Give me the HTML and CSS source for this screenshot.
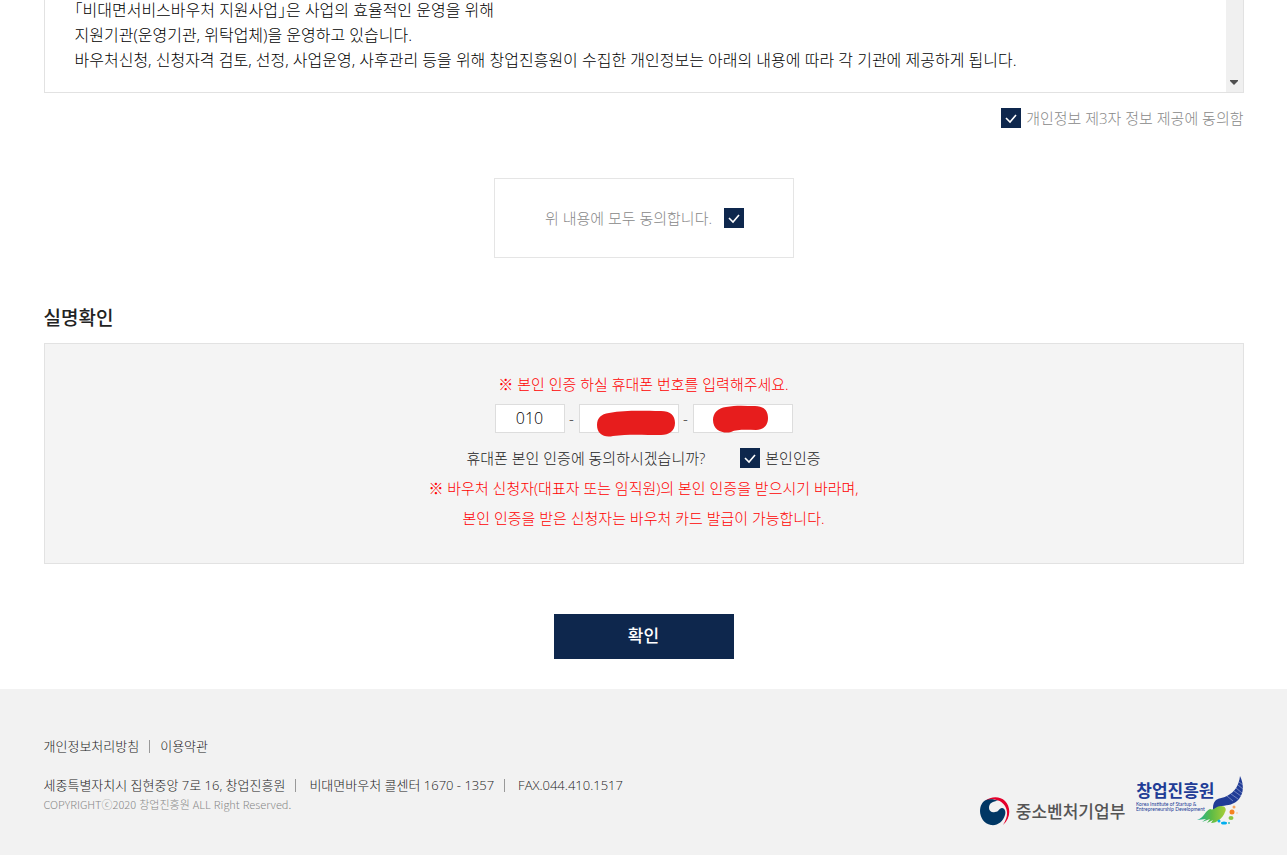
FILE: index.html
```html
<!DOCTYPE html>
<html lang="ko">
<head>
<meta charset="utf-8">
<meta name="viewport" content="width=device-width, initial-scale=1">
<title>실명확인</title>
<link rel="stylesheet" href="styles.css">
</head>
<body>
<main class="container">
  <section class="terms">
    <div class="terms-text">
      <p>「비대면서비스바우처 지원사업」은 사업의 효율적인 운영을 위해</p>
      <p>지원기관(운영기관, 위탁업체)을 운영하고 있습니다.</p>
      <p>바우처신청, 신청자격 검토, 선정, 사업운영, 사후관리 등을 위해 창업진흥원이 수집한 개인정보는 아래의 내용에 따라 각 기관에 제공하게 됩니다.</p>
    </div>
    <div class="scroll-track">
      <svg width="8" height="5" viewBox="0 0 8 5" aria-hidden="true"><path d="M0 0h8v1L4 5 0 1z" fill="#505050"/></svg>
    </div>
  </section>

  <div class="consent">
    <input class="check" type="checkbox" id="third" checked>
    <label for="third">개인정보 제3자 정보 제공에 동의함</label>
  </div>

  <div class="agree-all">
    <label for="all">위 내용에 모두 동의합니다.</label>
    <input class="check" type="checkbox" id="all" checked>
  </div>

  <form class="verify">
    <h2 class="title">실명확인</h2>
    <div class="panel">
      <p class="notice">※ 본인 인증 하실 휴대폰 번호를 입력해주세요.</p>
      <div class="phone">
        <input class="phone-input phone-first" type="text" value="010" aria-label="휴대폰 번호 앞자리">
        <span class="dash">-</span>
        <span class="masked">
          <input class="phone-input" type="text" aria-label="휴대폰 번호 가운데 자리">
          <svg class="mask mask-middle" width="80" height="28" viewBox="0 0 80 28" aria-hidden="true"><path d="M13 3C30 0 45 1 65 1c9 0 14 4 14 12s-6 12-14 12c-18 0-33-1-48 1C8 28 1 24 1 15 1 8 5 4 13 3z" fill="#e71d1d"/></svg>
        </span>
        <span class="dash">-</span>
        <span class="masked">
          <input class="phone-input" type="text" aria-label="휴대폰 번호 끝자리">
          <svg class="mask mask-last" width="58" height="28" viewBox="0 0 58 28" aria-hidden="true"><path d="M14 2C25 0 33 1 43 1c8 0 13 4 13 12s-5 12-12 12c-8 0-19-1-25 2-7 2-18-1-18-12C1 8 6 3 14 2z" fill="#e71d1d"/></svg>
        </span>
      </div>
      <div class="question">
        <span class="question-text">휴대폰 본인 인증에 동의하시겠습니까?</span>
        <input class="check" type="checkbox" id="self" checked>
        <label for="self">본인인증</label>
      </div>
      <p class="notice">※ 바우처 신청자(대표자 또는 임직원)의 본인 인증을 받으시기 바라며,<br>본인 인증을 받은 신청자는 바우처 카드 발급이 가능합니다.</p>
    </div>
    <button class="submit" type="button">확인</button>
  </form>
</main>

<footer class="footer">
  <div class="container footer-inner">
    <div class="footer-info">
      <nav class="divided footer-links">
        <a href="#">개인정보처리방침</a>
        <a href="#">이용약관</a>
      </nav>
      <address class="divided address">
        <span>세종특별자치시 집현중앙 7로 16, 창업진흥원</span>
        <span>비대면바우처 콜센터 1670 - 1357</span>
        <span>FAX.044.410.1517</span>
      </address>
      <p class="copyright">COPYRIGHTⓒ2020 창업진흥원 ALL Right Reserved.</p>
    </div>
    <div class="logos">
      <a class="logo-mss" href="#">
        <svg width="30" height="29" viewBox="0 0 30 29" aria-hidden="true">
          <path d="M5 4C11-1 20-1 25 4c6 6 6 17-2 24 5-8 5-14 2-19C21 2 12 1 5 4z" fill="#e4002b"/>
          <path d="M6 3C9 2 14 2 18 4 13 4 9 6 9 11c0 3 3 5 6 4 4 0 4-4 7-4s4 4 3 7c-2 7-8 11-14 10C4 27 0 20 0 14 0 9 2 5 6 3z" fill="#003764"/>
        </svg>
        <span>중소벤처기업부</span>
      </a>
      <a class="logo-kised" href="#">
        <span class="kised-text">
          <strong class="kised-name">창업진흥원</strong>
          <svg width="76" height="11" viewBox="0 0 76 11" role="img" aria-label="Korea Institute of Startup &amp; Entrepreneurship Development">
            <text class="kised-small" x="0" y="4">Korea Institute of Startup &amp;</text>
            <text class="kised-small" x="0" y="9">Entrepreneurship Development</text>
          </svg>
        </span>
        <svg class="kised-mark" width="48" height="50" viewBox="0 0 48 50" aria-hidden="true">
          <defs>
            <linearGradient id="leaf" x1="0" x2="1"><stop offset="0" stop-color="#19b09a"/><stop offset="0.5" stop-color="#5dbb46"/><stop offset="1" stop-color="#a8ce38"/></linearGradient>
          </defs>
          <path d="M44 0c4 8 4 17-1 23-5 6-11 6-17 7-3 1-5 5-9 4 0-4 0-7 3-10 3-2 7-2 11-4C39 16 43 9 44 0z" fill="#213c96"/>
          <path d="M43 6l4 3M42 9l5 4M40 12l6 5M38 15l7 5M35 18l7 5M31 20l6 5" stroke="#a9b4dc" stroke-width="0.6" fill="none"/>
          <path d="M14 33c4 2 6-3 11-3 4 0 6 3 4 6-2 6-8 11-14 11l2-3-6 3 3-4-8 3 4-3-9 1c7-2 8-9 13-11z" fill="url(#leaf)"/>
          <circle cx="36" cy="36" r="2.500" fill="#f58220"/>
          <circle cx="38" cy="31" r="1.500" fill="#f7a35c"/>
          <circle cx="41" cy="37" r="0.800" fill="#f9c08e"/>
          <ellipse cx="35" cy="42" rx="2.500" ry="2" fill="#8dc63f"/>
          <ellipse cx="28" cy="47" rx="3" ry="1.500" fill="#00aeef"/>
          <circle cx="23" cy="45" r="1.500" fill="#00aeef"/>
          <circle cx="33" cy="47" r="1" fill="#3dbfb0"/>
        </svg>
      </a>
    </div>
  </div>
</footer>
</body>
</html>
```
FILE: styles.css
```css
* {
  box-sizing: border-box;
}

body {
  margin: 0;
  min-height: 100vh;
  display: flex;
  flex-direction: column;
  background: #fff;
  color: #222;
  font-family: "Open Sans", "Noto Sans CJK KR", sans-serif;
  font-size: 15px;
  font-weight: 300;
  line-height: 30px;
}

p {
  margin: 0;
}

a {
  color: inherit;
  text-decoration: none;
}

.container {
  width: 100%;
  max-width: 1200px;
  margin: 0 auto;
}

.terms {
  display: flex;
  border: 1px solid #e2e2e2;
  border-top: 0;
  color: #000;
  font-size: 16px;
  line-height: 25px;
}

.terms-text {
  flex: 1;
  margin-top: -2px;
  padding: 0 30px 19px;
  font-feature-settings: "halt" 1;
}

.scroll-track {
  width: 17px;
  display: flex;
  align-items: flex-end;
  justify-content: center;
  padding-bottom: 7px;
  background: #f0f0f0;
}

.check {
  appearance: none;
  flex: none;
  width: 20px;
  height: 20px;
  margin: 0;
  background: #0e274d url("data:image/svg+xml,%3Csvg xmlns='http://www.w3.org/2000/svg' viewBox='0 0 20 20'%3E%3Cpath d='M5 10l4 4 6-7' fill='none' stroke='white' stroke-width='1.600'/%3E%3C/svg%3E");
}

.consent {
  display: flex;
  align-items: center;
  justify-content: flex-end;
  gap: 5px;
  margin-top: 10px;
  color: #888;
}

.agree-all {
  display: flex;
  align-items: center;
  justify-content: center;
  gap: 12px;
  width: 300px;
  height: 80px;
  margin: 45px auto 0;
  padding-left: 2px;
  border: 1px solid #e5e5e5;
  color: #888;
}

.verify {
  display: flex;
  flex-direction: column;
  margin-top: 45px;
}

.title {
  margin: 0 0 10px;
  font-size: 19px;
  font-weight: 500;
}

.panel {
  padding: 25px 20px 30px;
  border: 1px solid #e2e2e2;
  background: #f4f4f4;
  text-align: center;
}

.notice {
  color: #f00;
}

.phone {
  display: flex;
  justify-content: center;
  padding: 5px 0 10px;
  line-height: 29px;
}

.phone-input {
  display: block;
  width: 100px;
  height: 29px;
  padding: 0;
  border: 1px solid #ddd;
  background: #fff;
  color: #000;
  font: inherit;
  font-size: 16px;
  text-align: center;
}

.phone-first {
  width: 70px;
}

.dash {
  width: 14px;
}

.masked {
  position: relative;
}

.mask {
  position: absolute;
  top: 6px;
  left: 17px;
}

.mask-last {
  top: 1px;
  left: 19px;
}

.question {
  display: flex;
  align-items: center;
  justify-content: center;
  gap: 5px;
}

.question-text {
  margin-right: 30px;
}

.submit {
  align-self: center;
  width: 180px;
  height: 45px;
  margin: 50px 0 30px;
  padding: 0 0 2px;
  border: 0;
  background: #0e274d;
  color: #fff;
  font: inherit;
  font-size: 17px;
  font-weight: 500;
}

.footer {
  flex: 1;
  background: #f2f2f2;
  font-size: 13px;
  line-height: 20px;
}

.footer-inner {
  display: flex;
  justify-content: space-between;
  padding: 47px 0 30px;
}

.divided {
  display: flex;
  align-items: center;
  font-style: normal;
}

.divided > * + * {
  display: flex;
  align-items: center;
}

.divided > * + *::before {
  content: "";
  width: 1px;
  height: 13px;
  margin: 0 13px 0 10px;
  background: #999;
}

.footer-links > * + *::before {
  margin-right: 10px;
}

.address {
  margin-top: 19px;
}

.copyright {
  color: #888;
  font-family: "Noto Sans CJK KR", sans-serif;
  font-size: 11px;
  line-height: 18px;
}

.logos {
  display: flex;
  align-items: flex-end;
  gap: 11px;
  padding-top: 40px;
}

.logo-mss {
  display: flex;
  align-items: center;
  gap: 6px;
  color: #555;
  font-size: 17px;
  font-weight: 500;
}

.logo-kised {
  display: flex;
}

.kised-text {
  display: flex;
  flex-direction: column;
  padding-top: 4px;
  margin-right: -19px;
}

.kised-name {
  color: #213c96;
  font-size: 17px;
  font-weight: 700;
  line-height: 22px;
}

.kised-small {
  fill: #213c96;
  font-family: Lato, sans-serif;
  font-size: 5px;
  font-weight: 400;
}
```
